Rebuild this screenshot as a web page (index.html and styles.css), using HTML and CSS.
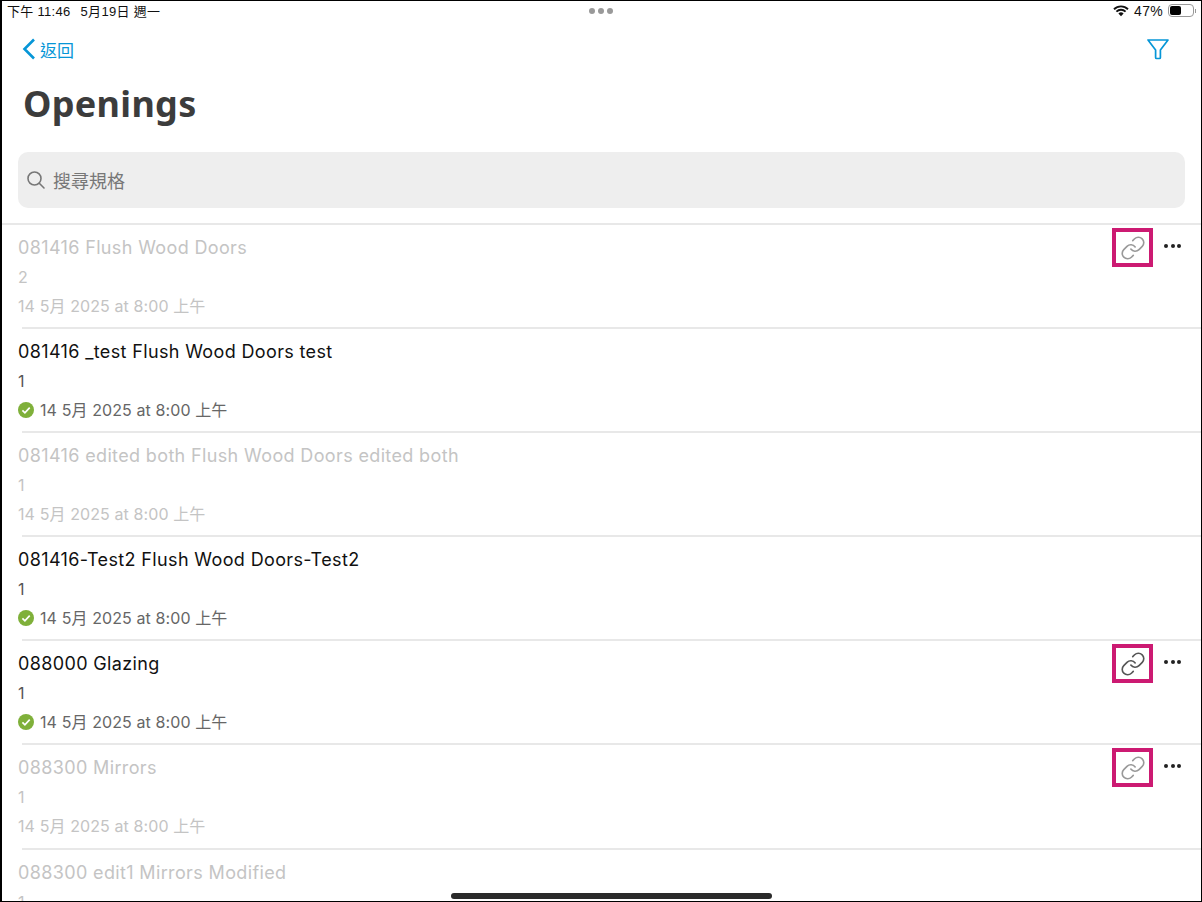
FILE: index.html
```html
<!DOCTYPE html>
<html lang="zh-Hant">
<head>
  <meta charset="UTF-8" />
  <title>Openings</title>
  <link rel="stylesheet" href="styles.css">
</head>
<body>
  <div class="screen">
    <!-- STATUS BAR -->
    <div class="status">
      <span class="status-left"><span>下午 11:46</span><span>5月19日 週一</span></span>
      <span class="status-dots"><i></i><i></i><i></i></span>
      <span class="status-right">
        <svg class="wifi" width="16" height="12" viewBox="0 0 16 12">
          <path d="M1 4.2a10 10 0 0 1 14 0M3.4 6.6a6.6 6.6 0 0 1 9.2 0" fill="none" stroke="#111" stroke-width="1.9"/>
          <path d="M5.4 8.4a3.8 3.8 0 0 1 5.2 0L8 11.2z" fill="#111"/>
        </svg>
        <span>47%</span>
        <span class="battery"><b></b></span>
        <span class="battery-tip"></span>
      </span>
    </div>

    <!-- NAV -->
    <div class="nav">
      <a class="back">
        <svg width="14" height="22" viewBox="0 0 14 22">
          <path d="M12 1.5L2.5 11l9.5 9.5" fill="none" stroke="#0696d7" stroke-width="2.6"/>
        </svg>
        <span>返回</span>
      </a>
      <svg class="filter" width="24" height="24" viewBox="0 0 24 24">
        <path d="M2 3h20l-7.6 10v7.5a1 1 0 0 1-1 1h-2.8a1 1 0 0 1-1-1V13z" fill="none" stroke="#0696d7" stroke-width="1.7" stroke-linejoin="round"/>
      </svg>
    </div>

    <h1>Openings</h1>

    <div class="search">
      <svg width="20" height="20" viewBox="0 0 20 20">
        <circle cx="8.5" cy="8.5" r="6.5" fill="none" stroke="#777" stroke-width="1.6"/>
        <path d="M13.3 13.3L18 18" stroke="#777" stroke-width="1.6" stroke-linecap="round"/>
      </svg>
      <span>搜尋規格</span>
    </div>

    <!-- LIST -->
    <div class="list">
      <div class="row first off">
        <div class="info">
          <p class="name">081416 Flush Wood Doors</p>
          <p class="rev">2</p>
          <p class="date">14 5月 2025 at 8:00 上午</p>
        </div>
        <div class="actions">
          <span class="link-box"><svg width="26" height="26"><use href="#link"/></svg></span>
          <span class="more"><i></i><i></i><i></i></span>
        </div>
      </div>

      <div class="row">
        <div class="info">
          <p class="name">081416 _test Flush Wood Doors test</p>
          <p class="rev">1</p>
          <p class="date"><svg class="check" width="16" height="16"><use href="#check"/></svg>14 5月 2025 at 8:00 上午</p>
        </div>
      </div>

      <div class="row off">
        <div class="info">
          <p class="name">081416 edited both Flush Wood Doors edited both</p>
          <p class="rev">1</p>
          <p class="date">14 5月 2025 at 8:00 上午</p>
        </div>
      </div>

      <div class="row">
        <div class="info">
          <p class="name">081416-Test2 Flush Wood Doors-Test2</p>
          <p class="rev">1</p>
          <p class="date"><svg class="check" width="16" height="16"><use href="#check"/></svg>14 5月 2025 at 8:00 上午</p>
        </div>
      </div>

      <div class="row">
        <div class="info">
          <p class="name">088000 Glazing</p>
          <p class="rev">1</p>
          <p class="date"><svg class="check" width="16" height="16"><use href="#check"/></svg>14 5月 2025 at 8:00 上午</p>
        </div>
        <div class="actions">
          <span class="link-box dark"><svg width="26" height="26"><use href="#link"/></svg></span>
          <span class="more"><i></i><i></i><i></i></span>
        </div>
      </div>

      <div class="row off">
        <div class="info">
          <p class="name">088300 Mirrors</p>
          <p class="rev">1</p>
          <p class="date">14 5月 2025 at 8:00 上午</p>
        </div>
        <div class="actions">
          <span class="link-box"><svg width="26" height="26"><use href="#link"/></svg></span>
          <span class="more"><i></i><i></i><i></i></span>
        </div>
      </div>

      <div class="row off">
        <div class="info">
          <p class="name">088300 edit1 Mirrors Modified</p>
          <p class="rev">1</p>
        </div>
      </div>
    </div>

    <div class="home-bar"></div>
  </div>

  <!-- shared icons -->
  <svg class="defs" width="0" height="0">
    <symbol id="link" viewBox="0 0 24 24">
      <path d="M10 13a5 5 0 0 0 7.54.54l3-3a5 5 0 0 0-7.07-7.07l-1.72 1.71" fill="none" stroke="currentColor" stroke-width="1.5" stroke-linecap="round"/>
      <path d="M14 11a5 5 0 0 0-7.54-.54l-3 3a5 5 0 0 0 7.07 7.07l1.71-1.71" fill="none" stroke="currentColor" stroke-width="1.5" stroke-linecap="round"/>
    </symbol>
    <symbol id="check" viewBox="0 0 16 16">
      <circle cx="8" cy="8" r="8" fill="#7fb03a"/>
      <path d="M4.4 8.3l2.5 2.5 4.8-5.2" fill="none" stroke="#fff" stroke-width="1.7"/>
    </symbol>
  </svg>
</body>
</html>
```

FILE: styles.css
```css
* {
  box-sizing: border-box;
}

body {
  margin: 0;
  background-color: #fff;
  font-family: "Noto Sans", "Noto Sans CJK TC", sans-serif;
}

p {
  margin: 0;
}

.screen {
  position: relative;
  width: 1202px;
  height: 902px;
  border: 1px solid #000;
  border-left-width: 2px;
  overflow: hidden;
}

.defs {
  position: absolute;
}

/* status bar */
.status {
  display: flex;
  justify-content: space-between;
  align-items: center;
  height: 19px;
  padding: 0 5px;
  font-family: "Liberation Sans", "Noto Sans CJK TC", sans-serif;
  font-size: 13px;
  letter-spacing: 0.3px;
  color: #111;
  position: relative;
}

.status-left {
  display: flex;
  gap: 10px;
}

.status-dots {
  position: absolute;
  left: 587px;
  top: 7px;
  display: flex;
  gap: 3px;
}

.status-dots i {
  width: 6px;
  height: 6px;
  border-radius: 50%;
  background-color: #999;
}

.status-right {
  display: flex;
  align-items: center;
  gap: 5px;
  font-size: 14px;
}

.battery {
  width: 26px;
  height: 13px;
  border: 1px solid #999;
  border-radius: 4px;
  padding: 1px;
}

.battery b {
  display: block;
  width: 11px;
  height: 9px;
  background-color: #000;
  border-radius: 2px;
}

.battery-tip {
  width: 1px;
  height: 4px;
  background-color: #999;
  margin-left: -4px;
}

/* nav */
.nav {
  display: flex;
  justify-content: space-between;
  align-items: center;
  height: 36px;
  margin-top: 11px;
  padding: 0 31px 0 20px;
}

.back {
  display: flex;
  align-items: center;
  gap: 4px;
  color: #0696d7;
  font-size: 17px;
}

h1 {
  margin: 7px 0 0 21px;
  height: 60px;
  font-size: 36px;
  line-height: 60px;
  font-weight: 700;
  letter-spacing: 0.3px;
  color: #3c3c3c;
}

.search {
  display: flex;
  align-items: center;
  gap: 7px;
  height: 56px;
  margin: 18px 16px 0 16px;
  padding-left: 8px;
  background-color: #eee;
  border-radius: 10px;
  color: #777;
  font-size: 18px;
}

/* list */
.list {
  margin-top: 15px;
}

.row {
  display: flex;
  justify-content: space-between;
  height: 104.1px;
  margin-left: 20px;
  border-top: 2px solid #e8e8e8;
  color: #111;
}

.row .info {
  margin-left: -4px;
}

.row.first {
  margin-left: 0;
  padding-left: 16px;
}

.row.first .info {
  margin-left: 0;
}

.name {
  margin-top: 9px;
  font-family: Inter, "Noto Sans CJK TC", sans-serif;
  font-size: 18px;
  line-height: 28px;
  letter-spacing: 0.36px;
}

.rev {
  margin-top: 2px;
  font-family: Inter, "Noto Sans CJK TC", sans-serif;
  font-size: 16px;
  line-height: 26px;
  color: #555;
}

.date {
  display: flex;
  align-items: center;
  gap: 6px;
  margin-top: 3px;
  font-family: Inter, "Noto Sans CJK TC", sans-serif;
  font-size: 16px;
  line-height: 26px;
  letter-spacing: 0.1px;
  color: #666;
}

.off .name,
.off .rev,
.off .date {
  color: #c4c4c4;
}

.actions {
  display: flex;
  align-items: flex-start;
  gap: 11px;
  padding: 3px 20px 0 0;
}

.link-box {
  display: flex;
  align-items: center;
  justify-content: center;
  width: 41px;
  height: 39px;
  border: 4px solid #cc1a72;
  color: #999;
}

.link-box.dark {
  color: #555;
}

.more {
  display: flex;
  gap: 2.5px;
  margin-top: 16px;
}

.more i {
  width: 4px;
  height: 4px;
  border-radius: 50%;
  background-color: #222;
}

.home-bar {
  position: absolute;
  left: 449px;
  bottom: 2px;
  width: 321px;
  height: 6px;
  border-radius: 3px;
  background-color: #2a2a2a;
}
```
